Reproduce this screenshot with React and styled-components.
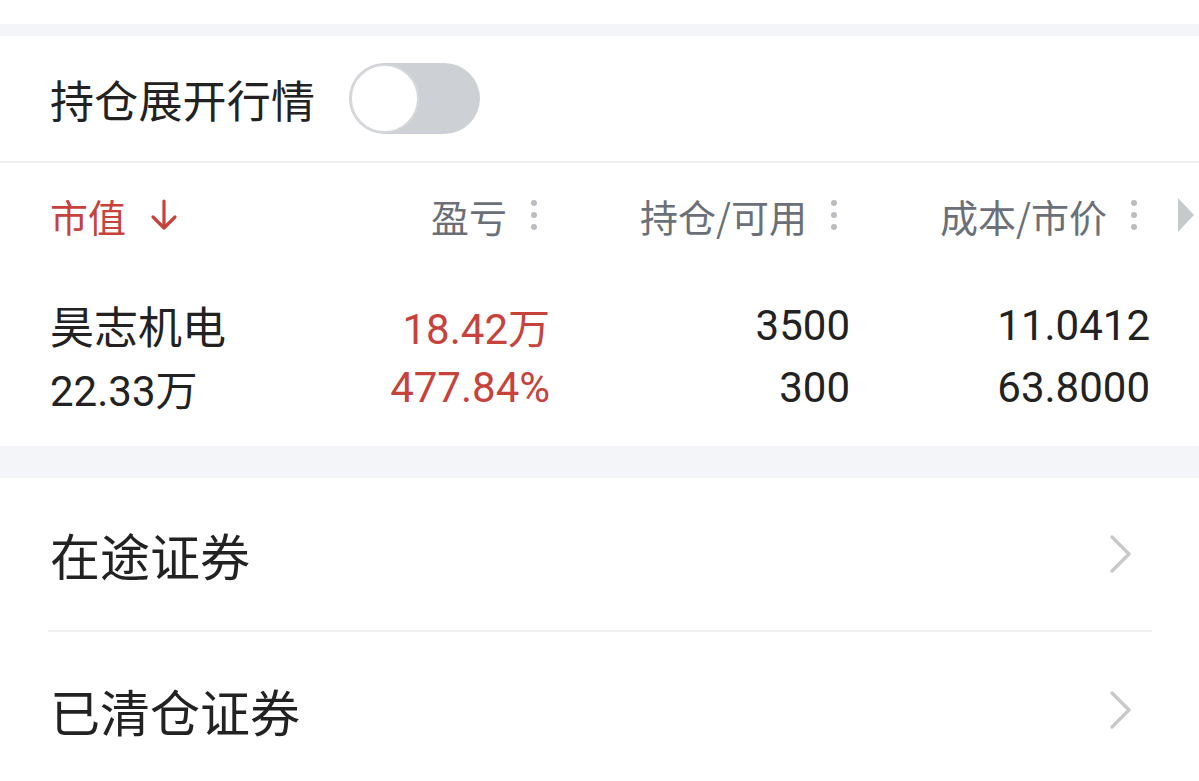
import React, { useState } from 'react'
import styled, { createGlobalStyle } from 'styled-components'

const GlobalStyle = createGlobalStyle`
  html, body {
    margin: 0;
    padding: 0;
    background: #fff;
    overflow: hidden;
  }
  body {
    font-family: Roboto, "Noto Sans CJK SC", sans-serif;
    color: #222;
  }
`

const RED = '#c8423c'

const Page = styled.div`
  width: 1199px;
  padding-top: 24px;
`

const Gap = styled.div`
  height: ${p => p.h}px;
  background: #f4f5f8;
`

const ToggleRow = styled.div`
  display: flex;
  align-items: center;
  height: 125px;
  padding-left: 50px;
  border-bottom: 2px solid #eef0f1;
`

const Title = styled.span`
  font-family: "Noto Sans CJK SC", sans-serif;
  font-size: 44px;
  letter-spacing: 0.2px;
  color: #222;
  margin-right: 34px;
`

const Track = styled.button`
  display: flex;
  align-items: center;
  justify-content: ${p => (p.on ? 'flex-end' : 'flex-start')};
  width: 131px;
  height: 71px;
  padding: 0;
  border: none;
  border-radius: 36px;
  background: ${p => (p.on ? RED : '#cdd0d5')};
  cursor: pointer;
`

const Knob = styled.span`
  box-sizing: border-box;
  width: 69px;
  height: 69px;
  margin: 0 1px;
  border-radius: 50%;
  background: #fff;
  border: 2px solid #d6d8db;
`

const Table = styled.div`
  padding: 0 0 27px 50px;
`

const Grid = styled.div`
  display: grid;
  grid-template-columns: 200px repeat(3, 300px) 1fr;
  align-items: center;
`

const HeadRow = styled(Grid)`
  height: 104px;
`

const HeadCell = styled.div`
  display: flex;
  align-items: center;
  justify-content: ${p => (p.left ? 'flex-start' : 'flex-end')};
  padding-right: ${p => (p.left ? 0 : 13)}px;
  font-family: "Noto Sans CJK SC", sans-serif;
  font-size: 38px;
  color: ${p => (p.active ? RED : '#6b7078')};
`

const Dots = styled.span`
  display: flex;
  flex-direction: column;
  gap: 6px;
  margin-left: 24px;

  i {
    width: 6px;
    height: 6px;
    border-radius: 50%;
    background: #b9bcc1;
  }
`

const ScrollHint = styled.div`
  display: flex;
  align-items: center;
  padding-left: 28px;
`

const Body = styled.div`
  padding-top: 26px;
`

const DataRow = styled(Grid)`
  height: 63px;
`

const Cell = styled.div`
  text-align: ${p => (p.left ? 'left' : 'right')};
  font-family: ${p => (p.cjk ? '"Noto Sans CJK SC"' : 'Roboto, "Noto Sans CJK SC"')}, sans-serif;
  font-size: ${p => (p.cjk ? 44 : 42)}px;
  color: ${p => (p.red ? RED : '#222')};
  white-space: nowrap;
`

const ListRow = styled.div`
  display: flex;
  align-items: center;
  justify-content: space-between;
  height: ${p => p.h}px;
  padding: 0 66px 0 50px;
`

const ListLabel = styled.span`
  font-family: "Noto Sans CJK SC", sans-serif;
  font-size: 50px;
  color: #222;
`

const Divider = styled.div`
  height: 2px;
  margin: 0 47px 0 48px;
  background: #eef0f1;
`

const Dotmenu = () => (
  <Dots>
    <i />
    <i />
    <i />
  </Dots>
)

const DownArrow = () => (
  <svg width="28" height="34" viewBox="0 0 28 34" style={{ marginLeft: 24 }}>
    <path d="M14 3 V30 M3 19 L14 30 L25 19" fill="none" stroke={RED} strokeWidth="3.2" strokeLinecap="round" strokeLinejoin="round" />
  </svg>
)

const Chevron = () => (
  <svg width="24" height="40" viewBox="0 0 24 40">
    <path d="M3 3 L20 20 L3 37" fill="none" stroke="#c9c9c9" strokeWidth="3.4" strokeLinecap="round" strokeLinejoin="round" />
  </svg>
)

const rows = [
  ['昊志机电', '18.42万', '3500', '11.0412'],
  ['22.33万', '477.84%', '300', '63.8000'],
]

export default function App() {
  const [on, setOn] = useState(false)

  return (
    <Page>
      <GlobalStyle />
      <Gap h={12} />
      <ToggleRow>
        <Title>持仓展开行情</Title>
        <Track on={on ? 1 : 0} onClick={() => setOn(!on)}>
          <Knob />
        </Track>
      </ToggleRow>

      <Table>
        <HeadRow>
          <HeadCell left active>
            市值
            <DownArrow />
          </HeadCell>
          <HeadCell>
            盈亏
            <Dotmenu />
          </HeadCell>
          <HeadCell>
            持仓/可用
            <Dotmenu />
          </HeadCell>
          <HeadCell>
            成本/市价
            <Dotmenu />
          </HeadCell>
          <ScrollHint>
            <svg width="16" height="34" viewBox="0 0 16 34">
              <path d="M0 0 L16 17 L0 34 Z" fill="#c6c9cd" />
            </svg>
          </ScrollHint>
        </HeadRow>
        <Body>
          {rows.map((r, i) => (
            <DataRow key={i}>
              <Cell left cjk={i === 0}>{r[0]}</Cell>
              <Cell red>{r[1]}</Cell>
              <Cell>{r[2]}</Cell>
              <Cell>{r[3]}</Cell>
            </DataRow>
          ))}
        </Body>
      </Table>

      <Gap h={32} />
      <ListRow h={152}>
        <ListLabel>在途证券</ListLabel>
        <Chevron />
      </ListRow>
      <Divider />
      <ListRow h={156}>
        <ListLabel>已清仓证券</ListLabel>
        <Chevron />
      </ListRow>
    </Page>
  )
}
